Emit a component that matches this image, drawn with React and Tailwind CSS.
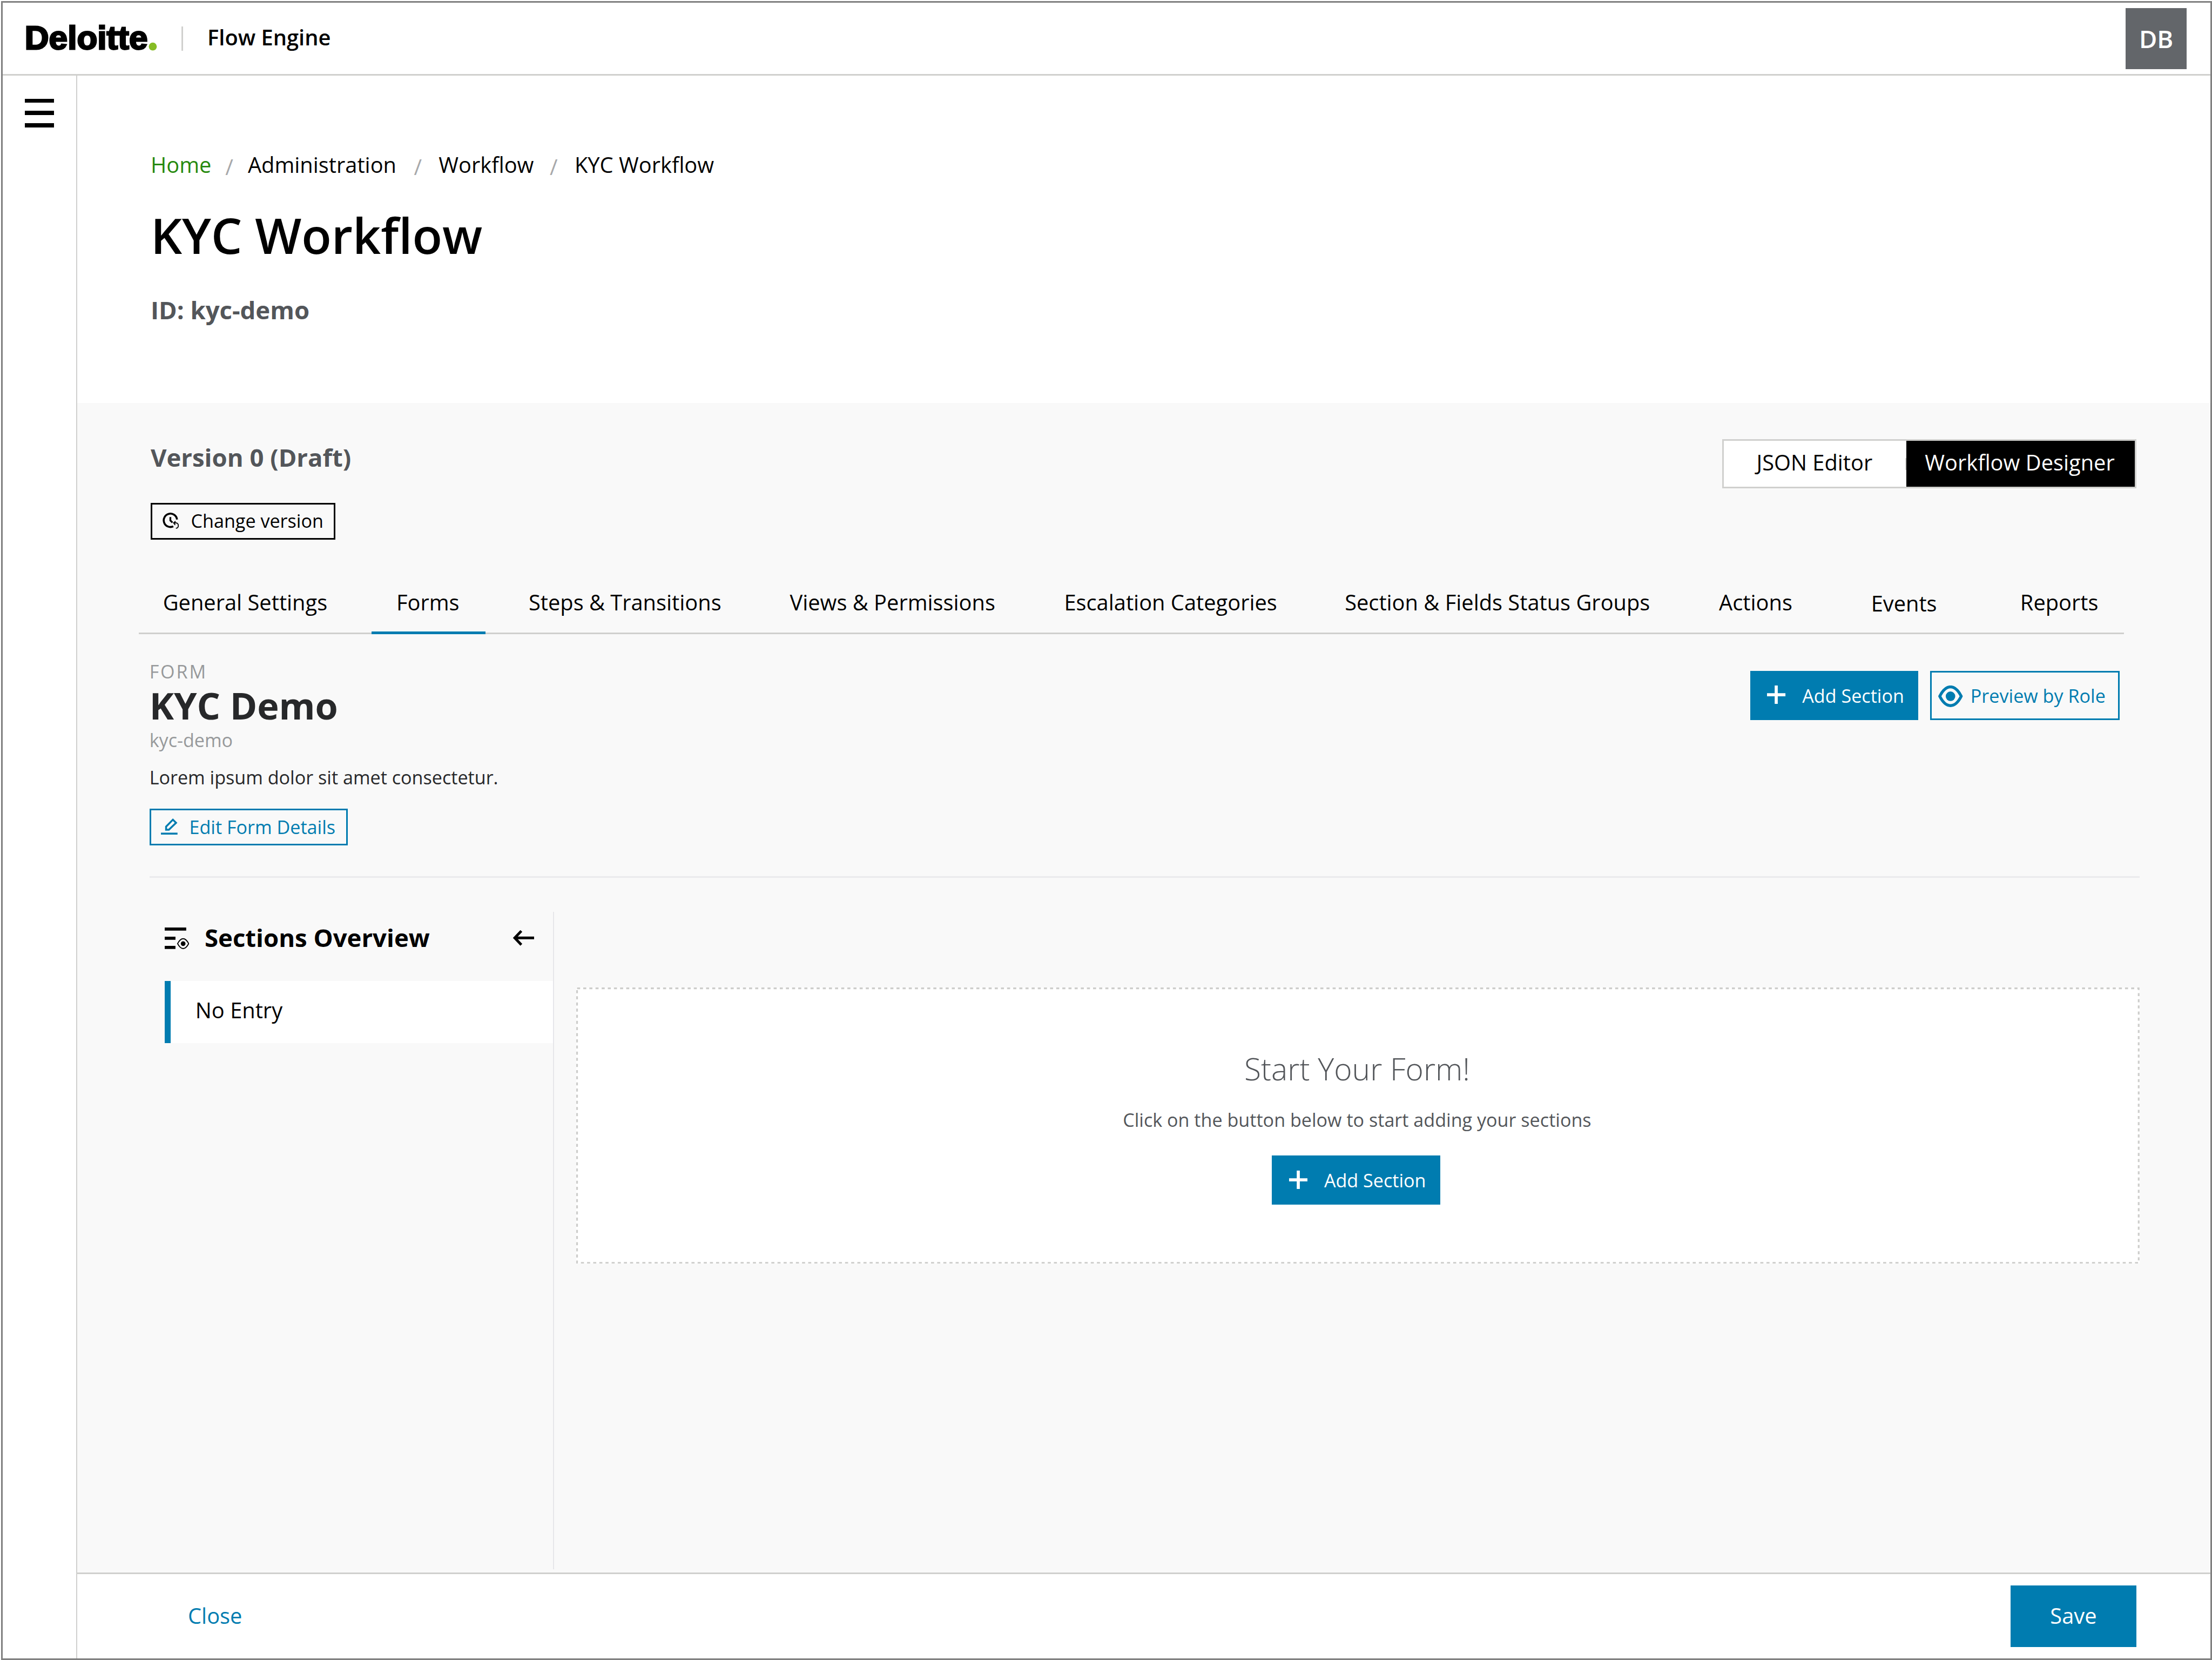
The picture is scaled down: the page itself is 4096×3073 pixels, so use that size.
const tabs = [
  { label: "General Settings", cls: "w-[151.8px] pl-[15.8px]" },
  { label: "Forms", cls: "w-[73.9px] pl-4", active: true },
  { label: "Steps & Transitions", cls: "w-[169.8px] pl-[28.2px]" },
  { label: "Views & Permissions", cls: "w-[179px] pl-[28.4px]" },
  { label: "Escalation Categories", cls: "w-[182.5px] pl-[28px]" },
  { label: "Section & Fields Status Groups", cls: "w-[243.8px] pl-[28.2px]" },
  { label: "Actions", cls: "w-[99px] pl-[28px]" },
  { label: "Events", cls: "w-[97px] pl-[28px] pt-[0.7px]" },
  { label: "Reports", cls: "pl-[28.1px]" },
];

const crumbs = [
  { label: "Administration", gap: "ml-[9.5px]", slash: "ml-[9.1px]" },
  { label: "Workflow", gap: "ml-[11px]", slash: "ml-[11.4px]" },
  { label: "KYC Workflow", gap: "ml-[11px]", slash: "ml-[10.4px]" },
];

function Logo() {
  return (
    <svg className="h-[22px] w-[90px] overflow-visible" viewBox="0 0 90 22">
      <text
        x="-0.8"
        y="18.35"
        textLength="80.1"
        lengthAdjust="spacingAndGlyphs"
        fontSize="21.2"
        stroke="#000"
        strokeWidth="1"
        className="fill-black font-['Liberation_Sans',sans-serif] font-bold"
      >
        Deloitte
      </text>
      <circle cx="82.6" cy="16.6" r="2.6" fill="#86bc25" />
    </svg>
  );
}

function HistoryIcon() {
  return (
    <svg className="h-[10.4px] w-[10.8px]" viewBox="98 90 102 98" fill="none" stroke="#000">
      <path d="M187 132A41 41 0 1 0 164 174" strokeWidth="12" />
      <path d="M146 117V138L159 151" strokeWidth="11" />
      <path d="M166 153H180C200 153 200 186 180 186M178 143L166 153L176 166" strokeWidth="6" />
    </svg>
  );
}

function PencilIcon() {
  return (
    <svg className="h-[10.6px] w-[10.8px]" viewBox="0 0 10.8 10.6" fill="none" stroke="#007cb0">
      <path d="M7.8 .85L9.85 2.9L5.15 7.4H3.35V5.35Z" strokeWidth="1.2" />
      <path d="M0 9.95H10.8" strokeWidth="1.3" />
    </svg>
  );
}

function PlusIcon() {
  return (
    <svg className="size-[12px]" viewBox="0 0 12 12" stroke="#fff" strokeWidth="2">
      <path d="M6 0V12M0 6H12" />
    </svg>
  );
}

function EyeIcon() {
  return (
    <svg className="h-[14px] w-[16px]" viewBox="-8 -7 16 14" fill="none" stroke="#007cb0">
      <path d="M-7 0C-5 -4 -3 -6.1 0 -6.1S5 -4 7 0C5 4 3 6.1 0 6.1S-5 4 -7 0Z" strokeWidth="1.9" strokeLinejoin="round" />
      <circle r="3.1" fill="#007cb0" stroke="none" />
    </svg>
  );
}

function OverviewIcon() {
  return (
    <svg className="h-[14.1px] w-[16px]" viewBox="0 0 16 14.1" fill="none" stroke="#000">
      <path d="M0 1H14M0 7H7M0 13H7" strokeWidth="2" />
      <path d="M8.4 10.5C9.5 8.4 10.5 7.3 12 7.3S14.5 8.4 15.6 10.5C14.5 12.6 13.5 13.7 12 13.7S9.5 12.6 8.4 10.5Z" strokeWidth=".7" strokeLinejoin="round" />
      <circle cx="12" cy="10.5" r="1.55" fill="#000" stroke="none" />
    </svg>
  );
}

function ArrowLeftIcon() {
  return (
    <svg className="h-[10px] w-[13.8px]" viewBox="0 0 13.8 10" fill="none" stroke="#000" strokeWidth="1.7">
      <path d="M1 5H13.8M5.4 .5L1.1 5L5.4 9.5" />
    </svg>
  );
}

function AddSectionButton() {
  return (
    <button className="flex h-[32px] w-[109.4px] items-start bg-[#007cb0] pl-[11.1px] text-white">
      <span className="mt-[9.6px]"><PlusIcon /></span>
      <span className="mt-[8.3px] ml-[10.8px] text-[12px] leading-4 whitespace-nowrap">Add Section</span>
    </button>
  );
}

export default function App() {
  return (
    <div className="[zoom:2.844444] h-[1080.35px] w-[1440px] overflow-hidden bg-white pt-[0.7px] pl-[0.7px] font-['Open_Sans',sans-serif] text-black">
      <div className="flex h-full w-full flex-col border-[1.1px] border-[#808080]">
        <header className="flex h-[47.5px] shrink-0 items-start border-b-[1.1px] border-[#d0d0ce] pl-[15.2px]">
          <div className="mt-[12.1px] flex"><Logo /></div>
          <div className="mt-[15.3px] ml-[11.2px] h-[16px] w-[1px] bg-[#d0d0ce]" />
          <div className="mt-[12.6px] ml-[15.9px] text-[14px] leading-5 font-semibold">Flow Engine</div>
          <div className="mt-[3.4px] mr-[15.3px] ml-auto flex size-[40px] items-center justify-center bg-[#63666a] text-[16px] leading-6 font-semibold text-white">DB</div>
        </header>

        <div className="flex min-h-0 flex-1">
          <aside className="w-[48.5px] shrink-0 border-r-[0.8px] border-[#d0d0ce] pt-[15px] pl-[14.5px]">
            <div className="flex w-[18.8px] flex-col gap-[5.3px]">
              <div className="h-[2.7px] bg-black" />
              <div className="h-[2.7px] bg-black" />
              <div className="h-[2.7px] bg-black" />
            </div>
          </aside>

          <div className="flex min-w-0 flex-1 flex-col">
            <div className="h-[212.9px] shrink-0 pt-[48.2px] pl-[47.8px]">
              <nav className="flex text-[14px] leading-5">
                <span className="text-[#26890d]">Home</span>
                {crumbs.map((c) => (
                  <span key={c.label} className="flex">
                    <span className={"pt-[1.2px] text-[#a7a8aa] " + c.slash}>/</span>
                    <span className={c.gap}>{c.label}</span>
                  </span>
                ))}
              </nav>
              <h1 className="mt-[14.5px] text-[32px] leading-10 font-semibold">KYC Workflow</h1>
              <div className="mt-[16.5px] text-[16px] leading-6 font-bold text-[#53565a]">ID: kyc-demo</div>
            </div>

            <main className="flex min-h-0 flex-1 flex-col bg-[#f9f9f9] pt-[23.4px]">
              <div className="flex items-start justify-between pr-[48.2px] pl-[47.8px]">
                <div>
                  <div className="text-[16px] leading-6 font-bold text-[#53565a]">Version 0 (Draft)</div>
                  <button className="mt-[17.6px] flex h-[24px] w-[120.4px] items-start border-[1.1px] border-black pl-[6.6px]">
                    <span className="mt-[5.5px]"><HistoryIcon /></span>
                    <span className="mt-[3px] ml-[7.8px] text-[12px] leading-4 whitespace-nowrap">Change version</span>
                  </button>
                </div>
                <div className="mt-[0.4px] flex h-[31.9px] w-[269.6px] border-[1.1px] border-[#d0d0ce] bg-white text-[14px] leading-5 whitespace-nowrap">
                  <div className="flex w-[118.8px] items-center justify-between">
                    <span className="w-full pb-[1.4px] text-center">JSON Editor</span>
                    <span className="h-[7.8px] w-[0.8px] bg-[#d0d0ce]" />
                  </div>
                  <div className="flex flex-1 items-center justify-center bg-black pr-[1px] pb-[1.4px] text-white">Workflow Designer</div>
                </div>
              </div>

              <div className="mt-[31px] ml-[40px] flex h-[30.7px] w-[1292.5px] shrink-0 border-b-[1.1px] border-[#d0d0ce] text-[14px] leading-5 whitespace-nowrap">
                {tabs.map((t) => (
                  <div key={t.label} className={"shrink-0 " + t.cls + (t.active ? " h-[30.7px] border-b-[1.9px] border-[#007cb0]" : "")}>
                    {t.label}
                  </div>
                ))}
              </div>

              <div className="mr-[46.2px] ml-[47px] flex h-[158.4px] shrink-0 items-start justify-between border-b-[1.1px] border-[#ebebed] pt-[16.4px]">
                <div className="text-[12px] leading-4">
                  <div className="tracking-[1px] text-[#97999b]">FORM</div>
                  <h2 className="text-[24px] leading-7 font-bold text-[#27282a]">KYC Demo</h2>
                  <div className="mt-[0.7px] text-[#97999b]">kyc-demo</div>
                  <p className="mt-[8.4px] text-[#27282a]">Lorem ipsum dolor sit amet consectetur.</p>
                  <button className="mt-[11.9px] flex h-[24px] w-[129.3px] items-start border-[1.1px] border-[#007cb0] pl-[6.4px] text-[#007cb0]">
                    <span className="mt-[5.4px]"><PencilIcon /></span>
                    <span className="mt-[3.3px] ml-[7.7px] whitespace-nowrap">Edit Form Details</span>
                  </button>
                </div>
                <div className="mt-[7.4px] mr-[12.9px] flex gap-[7.9px]">
                  <AddSectionButton />
                  <button className="flex h-[32px] w-[123.2px] items-start border-[1.1px] border-[#007cb0] pl-[4.1px] text-[#007cb0]">
                    <span className="mt-[8.5px]"><EyeIcon /></span>
                    <span className="mt-[7.3px] ml-[5px] text-[12px] leading-4 whitespace-nowrap">Preview by Role</span>
                  </button>
                </div>
              </div>

              <div className="mt-[22.2px] mr-[46.2px] ml-[56.8px] flex min-h-0 flex-1">
                <div className="mb-[2px] w-[253.8px] shrink-0 border-r-[0.8px] border-[#e6e6ea] pt-[4.7px]">
                  <div className="flex h-[24px] items-start">
                    <span className="mt-[5.4px]"><OverviewIcon /></span>
                    <span className="ml-[10.2px] text-[16px] leading-6 font-bold">Sections Overview</span>
                    <span className="mt-[7.4px] mr-[12.5px] ml-auto"><ArrowLeftIcon /></span>
                  </div>
                  <div className="mt-[16.2px] h-[40.4px] border-l-[4.2px] border-[#007cb0] bg-white pt-[9.4px] pl-[16.3px] text-[14px] leading-5">No Entry</div>
                </div>
                <div className="relative mt-[49.2px] ml-[14.2px] flex h-[179.8px] flex-1 flex-col items-center bg-white pt-[39.2px] text-[#53565a]">
                  <svg className="absolute inset-0 h-full w-full" viewBox="0 0 1018 179.8" fill="none" preserveAspectRatio="none">
                    <rect x=".55" y=".55" width="1016.9" height="178.7" stroke="#cdcdcb" strokeWidth="1.1" strokeDasharray="2 2" />
                  </svg>
                  <div className="mr-[0.8px] text-[20px] leading-7 font-light">Start Your Form!</div>
                  <div className="mt-[11.3px] mr-[0.9px] text-[12px] leading-4">Click on the button below to start adding your sections</div>
                  <div className="mt-[15px] mr-[2.2px]"><AddSectionButton /></div>
                </div>
              </div>
            </main>

            <footer className="flex h-[56px] shrink-0 items-start border-t-[1.1px] border-[#d0d0ce] bg-white pr-[48.2px] pl-[72.1px] text-[14px] leading-5">
              <span className="mt-[17.4px] text-[#007cb0]">Close</span>
              <button className="mt-[7.4px] ml-auto h-[40px] w-[81.9px] bg-[#007cb0] text-center text-white">Save</button>
            </footer>
          </div>
        </div>
      </div>
    </div>
  );
}
